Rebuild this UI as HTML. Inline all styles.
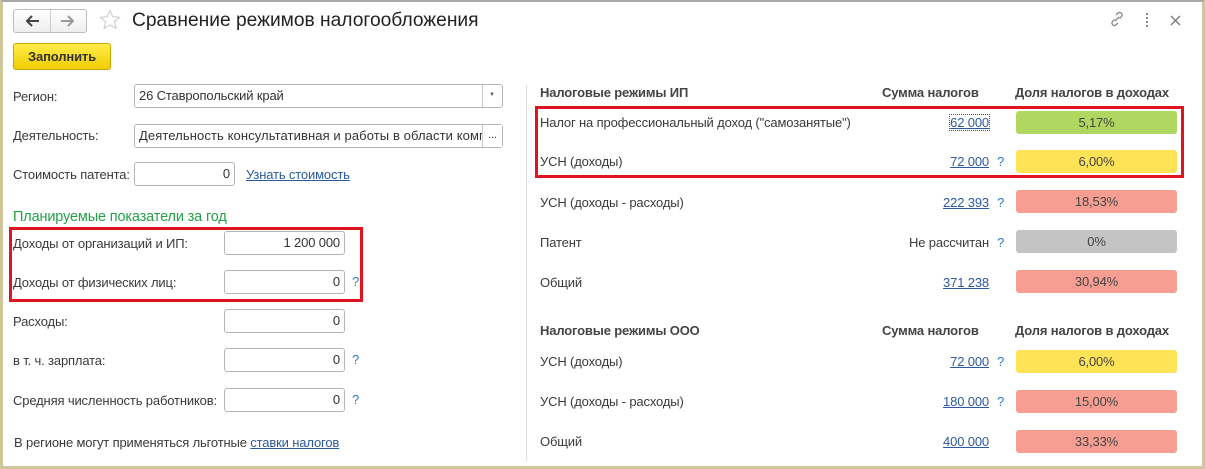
<!DOCTYPE html>
<html><head><meta charset="utf-8"><style>
*{margin:0;padding:0;box-sizing:border-box}
body{width:1205px;height:469px;overflow:hidden;background:#fff;font-family:"Liberation Sans",Arial,sans-serif;font-size:13px;color:#3a3a3a;position:relative;letter-spacing:-0.15px}
.a{position:absolute;white-space:nowrap}
.frame{position:absolute;left:0;top:0;width:1205px;height:469px;border-left:3px solid #cfc79a;border-right:3px solid #cfc79a;border-bottom:3px solid #cfc79a;border-top:2px solid #a9a9a9}
.inp{position:absolute;border:1px solid #b5b5b5;border-radius:3px;background:#fff;height:24px;line-height:22px;padding:0 4px;color:#333;font-size:13px}
.r{text-align:right}
.lnk{color:#2c5a9e;text-decoration:underline}
.q{color:#2c7ac0}
.bar{position:absolute;left:1016px;width:161px;height:23px;border-radius:3px;text-align:center;line-height:23px;color:#444;font-size:13px}
.red{position:absolute;border:3px solid #e0141e}
.h{font-weight:bold;color:#444;font-size:13px}
</style></head><body>
<div class="frame"></div>
<div class="a" style="left:13px;top:9px;width:74px;height:24px;border:1px solid #bdbdbd;border-radius:3px;background:linear-gradient(#fff,#eee)"></div>
<div class="a" style="left:50px;top:10px;width:1px;height:22px;background:#ccc"></div>
<svg class="a" style="left:24px;top:14px" width="16" height="14" viewBox="0 0 16 14"><path d="M15 7H3M8 2L3 7l5 5" fill="none" stroke="#444" stroke-width="2"/></svg>
<svg class="a" style="left:60px;top:14px" width="16" height="14" viewBox="0 0 16 14"><path d="M1 7h12M8 2l5 5-5 5" fill="none" stroke="#999" stroke-width="2"/></svg>
<svg class="a" style="left:99px;top:9px" width="22" height="22" viewBox="0 0 22 22"><path d="M11 1.5l2.8 6.2 6.7.6-5.1 4.4 1.6 6.6L11 15.8l-6 3.5 1.6-6.6-5.1-4.4 6.7-.6z" fill="none" stroke="#c8c8c8" stroke-width="1"/></svg>
<div class="a" style="left:132px;top:10px;font-size:19.2px;color:#222;letter-spacing:0">Сравнение режимов налогообложения</div>
<svg class="a" style="left:1109px;top:11px" width="16" height="16" viewBox="0 0 16 16"><g fill="none" stroke="#888" stroke-width="1.3"><path d="M7 4l2-2a2.5 2.5 0 0 1 3.5 3.5l-2 2"/><path d="M9 12l-2 2a2.5 2.5 0 0 1-3.5-3.5l2-2"/><path d="M6 10l4-4"/></g></svg>
<div class="a" style="left:1146px;top:13px;width:2px;height:14px;background:repeating-linear-gradient(#888 0 2px,transparent 2px 4px)"></div>
<svg class="a" style="left:1170px;top:15px" width="11" height="11" viewBox="0 0 11 11"><path d="M1 1l9 9M10 1l-9 9" stroke="#777" stroke-width="1.3"/></svg>
<div class="a" style="left:13px;top:43px;width:98px;height:27px;border:1px solid #c9a600;border-radius:3px;background:linear-gradient(#ffec4a,#f0cd00);text-align:center;line-height:25px;font-weight:bold;font-size:13px;color:#333">Заполнить</div>
<div class="a" style="left:13px;top:89px">Регион:</div>
<div class="inp" style="left:134px;top:84px;width:369px">26 Ставропольский край</div>
<div class="a" style="left:482px;top:85px;width:1px;height:22px;background:#ccc"></div>
<div class="a" style="left:489px;top:92px;font-size:6px;color:#555">▼</div>
<div class="a" style="left:13px;top:128px">Деятельность:</div>
<div class="inp" style="left:134px;top:124px;width:369px;overflow:hidden;letter-spacing:0.1px">Деятельность консультативная и работы в области компь</div>
<div class="a" style="left:482px;top:125px;width:20px;height:22px;background:#fff;border-left:1px solid #ccc;text-align:center;line-height:20px;font-size:11px">...</div>
<div class="a" style="left:13px;top:167px">Стоимость патента:</div>
<div class="inp r" style="left:134px;top:162px;width:101px">0</div>
<div class="a lnk" style="left:246px;top:167px">Узнать стоимость</div>
<div class="a" style="left:13px;top:209px;font-size:14.5px;color:#24a04a">Планируемые показатели за год</div>
<div class="a" style="left:13px;top:236px">Доходы от организаций и ИП:</div>
<div class="inp r" style="left:224px;top:231px;width:121px">1 200 000</div>
<div class="a" style="left:13px;top:275px">Доходы от физических лиц:</div>
<div class="inp r" style="left:224px;top:270px;width:121px">0</div><div class="a q" style="left:352px;top:274px">?</div>
<div class="a" style="left:13px;top:314px">Расходы:</div>
<div class="inp r" style="left:224px;top:309px;width:121px">0</div>
<div class="a" style="left:13px;top:353px">в т. ч. зарплата:</div>
<div class="inp r" style="left:224px;top:348px;width:121px">0</div><div class="a q" style="left:352px;top:352px">?</div>
<div class="a" style="left:13px;top:393px">Средняя численность работников:</div>
<div class="inp r" style="left:224px;top:388px;width:121px">0</div><div class="a q" style="left:352px;top:392px">?</div>
<div class="a" style="left:14px;top:435px">В регионе могут применяться льготные <span class="lnk">ставки налогов</span></div>
<div class="red" style="left:9px;top:227px;width:354px;height:75px"></div>
<div class="a" style="left:526px;top:85px;width:1px;height:376px;background:#ddd"></div>
<div class="a h" style="left:540px;top:85px">Налоговые режимы ИП</div>
<div class="a h" style="left:882px;top:85px">Сумма налогов</div>
<div class="a h" style="left:1015px;top:85px">Доля налогов в доходах</div>
<div class="a" style="left:540px;top:115px">Налог на профессиональный доход ("самозанятые")</div>
<div class="a lnk r" style="right:216px;top:115px;outline:1px dotted #555">62 000</div>
<div class="bar" style="top:111px;background:#b0d760">5,17%</div>
<div class="a" style="left:540px;top:154px">УСН (доходы)</div>
<div class="a lnk" style="right:216px;top:154px">72 000</div><div class="a q" style="left:997px;top:154px">?</div>
<div class="bar" style="top:150px;background:#fde355">6,00%</div>
<div class="red" style="left:535px;top:106px;width:649px;height:72px"></div>
<div class="a" style="left:540px;top:195px">УСН (доходы - расходы)</div>
<div class="a lnk" style="right:216px;top:195px">222 393</div><div class="a q" style="left:997px;top:195px">?</div>
<div class="bar" style="top:190px;background:#f79e92">18,53%</div>
<div class="a" style="left:540px;top:235px">Патент</div>
<div class="a" style="right:216px;top:235px">Не рассчитан</div><div class="a q" style="left:997px;top:235px">?</div>
<div class="bar" style="top:230px;background:#c4c4c4">0%</div>
<div class="a" style="left:540px;top:275px">Общий</div>
<div class="a lnk" style="right:216px;top:275px">371 238</div>
<div class="bar" style="top:270px;background:#f79e92">30,94%</div>
<div class="a h" style="left:540px;top:323px">Налоговые режимы ООО</div>
<div class="a h" style="left:882px;top:323px">Сумма налогов</div>
<div class="a h" style="left:1015px;top:323px">Доля налогов в доходах</div>
<div class="a" style="left:540px;top:354px">УСН (доходы)</div>
<div class="a lnk" style="right:216px;top:354px">72 000</div><div class="a q" style="left:997px;top:354px">?</div>
<div class="bar" style="top:350px;background:#fde355">6,00%</div>
<div class="a" style="left:540px;top:394px">УСН (доходы - расходы)</div>
<div class="a lnk" style="right:216px;top:394px">180 000</div><div class="a q" style="left:997px;top:394px">?</div>
<div class="bar" style="top:390px;background:#f79e92">15,00%</div>
<div class="a" style="left:540px;top:434px">Общий</div>
<div class="a lnk" style="right:216px;top:434px">400 000</div>
<div class="bar" style="top:430px;background:#f79e92">33,33%</div>
</body></html>
